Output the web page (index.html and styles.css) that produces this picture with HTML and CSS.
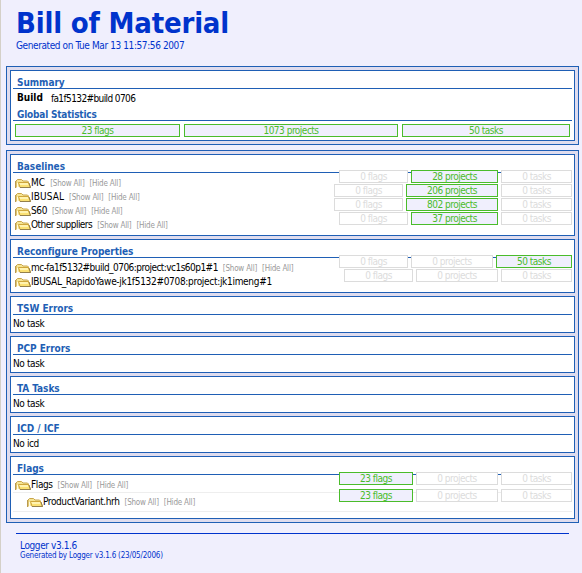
FILE: index.html
```
<!DOCTYPE html>
<html lang="en">
<head>
<meta charset="utf-8">
<title>Bill of Material</title>
<link rel="stylesheet" href="styles.css">
</head>
<body>
<svg class="defs" width="0" height="0">
  <symbol id="folder" viewBox="0 0 16 9">
    <path d="M1 8.500V2L2.500 .5H6.500L8 2H12.500L13.500 3V5" fill="#f5e493" stroke="#c9a54a"/>
    <path d="M.5 9V2" stroke="#b99a50" fill="none"/>
    <path d="M2.500 8V4" stroke="#fffbe0" fill="none"/>
    <path d="M3.500 3.500H13.500L15.500 8.500H5Z" fill="#fbe173" stroke="#cfa63c"/>
    <path d="M4.500 4.500H13M5 5.500H13" stroke="#fff3b0" fill="none"/>
    <path d="M14 4L15.500 8.500H5" stroke="#94804c" fill="none"/>
  </symbol>
</svg>
<header>
  <h1>Bill of Material</h1>
  <p class="date">Generated on Tue Mar 13 11:57:56 2007</p>
</header>
<main>
  <div class="group">
    <section class="summary">
      <h2>Summary</h2>
      <p class="build"><b>Build</b><span>fa1f5132#build 0706</span></p>
      <h2 class="second">Global Statistics</h2>
      <div class="totals"><span class="stat on">23 flags</span><span class="stat on">1073 projects</span><span class="stat on">50 tasks</span></div>
    </section>
  </div>
  <div class="group">
    <section class="baselines">
      <h2>Baselines</h2>
      <div class="rows">
        <div class="row"><div class="name"><svg><use href="#folder"/></svg><span class="wide">MC</span><small>[Show All]</small><small>[Hide All]</small></div><span class="stat f">0 flags</span><span class="stat on p2">28 projects</span><span class="stat t">0 tasks</span></div>
        <div class="row"><div class="name"><svg><use href="#folder"/></svg><span class="wide">IBUSAL</span><small>[Show All]</small><small>[Hide All]</small></div><span class="stat f">0 flags</span><span class="stat on p3">206 projects</span><span class="stat t">0 tasks</span></div>
        <div class="row"><div class="name"><svg><use href="#folder"/></svg><span>S60</span><small>[Show All]</small><small>[Hide All]</small></div><span class="stat f">0 flags</span><span class="stat on p3">802 projects</span><span class="stat t">0 tasks</span></div>
        <div class="row"><div class="name"><svg><use href="#folder"/></svg><span class="tight">Other suppliers</span><small>[Show All]</small><small>[Hide All]</small></div><span class="stat f">0 flags</span><span class="stat on p2">37 projects</span><span class="stat t">0 tasks</span></div>
      </div>
    </section>
    <section class="reconfigure">
      <h2>Reconfigure Properties</h2>
      <div class="rows">
        <div class="row"><div class="name"><svg><use href="#folder"/></svg><span class="tight">mc-fa1f5132#build_0706:project:vc1s60p1#1</span><small>[Show All]</small><small>[Hide All]</small></div><span class="stat f">0 flags</span><span class="stat p1">0 projects</span><span class="stat on t2">50 tasks</span></div>
        <div class="row"><div class="name"><svg><use href="#folder"/></svg><span class="loose">IBUSAL_RapidoYawe-jk1f5132#0708:project:jk1imeng#1</span></div><span class="stat f">0 flags</span><span class="stat p1">0 projects</span><span class="stat t">0 tasks</span></div>
      </div>
    </section>
    <section class="empty"><h2>TSW Errors</h2><p>No task</p></section>
    <section class="empty"><h2>PCP Errors</h2><p>No task</p></section>
    <section class="empty"><h2>TA Tasks</h2><p>No task</p></section>
    <section class="empty"><h2>ICD / ICF</h2><p>No icd</p></section>
    <section class="flags">
      <h2>Flags</h2>
      <div class="rows">
        <div class="row"><div class="name"><svg><use href="#folder"/></svg><span>Flags</span><small>[Show All]</small><small>[Hide All]</small></div><span class="stat on f2">23 flags</span><span class="stat p1">0 projects</span><span class="stat t">0 tasks</span></div>
        <div class="child"><div class="row"><div class="name"><svg><use href="#folder"/></svg><span>ProductVariant.hrh</span><small>[Show All]</small><small>[Hide All]</small></div><span class="stat on f2">23 flags</span><span class="stat p1">0 projects</span><span class="stat t">0 tasks</span></div></div>
      </div>
    </section>
  </div>
</main>
<footer>
  <p>Logger v3.1.6</p>
  <p class="version">Generated by Logger v3.1.6 (23/05/2006)</p>
</footer>
</body>
</html>
```
FILE: styles.css
```
* { box-sizing: border-box; }
body {
  margin: 0;
  height: 573px;
  overflow: hidden;
  padding: 0 3px 0 5px;
  border-left: 1px solid #d4d0c8;
  background: #f0effd;
  color: #000;
  font: 10px/14px "DejaVu Sans Condensed", "DejaVu Sans", sans-serif;
  letter-spacing: -0.4px;
  white-space: nowrap;
}
h1, h2, p { margin: 0; }
.defs { display: block; height: 0; }
header { height: 66px; padding: 7px 0 0 10px; color: #0033cc; }
h1 { font: bold 29px/32px "DejaVu Sans Condensed", "DejaVu Sans", sans-serif; letter-spacing: -0.2px; }
.date { line-height: 14px; }
main { display: flex; flex-direction: column; gap: 5px; }
.group {
  display: flex;
  flex-direction: column;
  gap: 3px;
  padding: 3px;
  border: 1px solid #1f5fb5;
  background: #dfdcee;
}
section { border: 1px solid #1f5fb5; background: #fff; padding: 0 2px; }
h2 {
  height: 18px;
  padding: 5px 0 0 4px;
  border-bottom: 1px solid #1f5fb5;
  color: #1f5fb5;
  font: bold 10px/13px "DejaVu Sans Condensed", "DejaVu Sans", sans-serif;
  letter-spacing: -0.05px;
}
.summary { height: 71px; }
.build { display: flex; gap: 8px; height: 18px; padding: 2px 0 0 4px; }
.build b { letter-spacing: 0; }
.build span { padding-top: 1px; letter-spacing: -0.6px; }
.second { height: 14px; padding-top: 1px; letter-spacing: -0.2px; }
.totals { display: grid; grid-template-columns: 165px 214px 168px; gap: 4px; padding: 3px 0 0 2px; }
.stat {
  flex: none;
  height: 13px;
  border: 1px solid #dcdcdc;
  background: #fff;
  color: #dcdcdc;
  line-height: 12px;
  letter-spacing: -0.5px;
  text-align: center;
}
.on { border-color: #4abc2b; background: #f0effd; color: #4abc2b; }
.baselines { height: 82px; }
.reconfigure { height: 54px; }
.empty { height: 37px; }
.empty p { padding-top: 2px; }
.flags { height: 63px; }
.rows { margin-top: -3px; }
.row { display: flex; gap: 3px; height: 14px; }
.name { flex: 1; min-width: 0; display: flex; height: 14px; padding-left: 2px; margin-top: 6px; }
.name svg { flex: none; width: 16px; height: 9px; margin: 3px 0 0; }
.name small { font-size: 8px; line-height: 15px; color: #999; letter-spacing: -0.2px; margin-left: 5px; }
.wide { letter-spacing: 0.1px; }
.tight { letter-spacing: -0.53px; }
.loose { letter-spacing: -0.3px; }
.f { width: 69px; }
.f2 { width: 74px; }
.p1 { width: 82px; }
.p2 { width: 87px; }
.p3 { width: 92px; }
.t { width: 71px; }
.t2 { width: 76px; }
.child { height: 20px; margin-top: 6px; border: solid #eee; border-width: 1px 0; }
.child .row { margin-top: -4px; }
.child .name { padding-left: 14px; }
footer { margin: 10px 10px 0 10px; padding: 5px 0 0 4px; border-top: 1px solid #0033cc; color: #0033cc; }
footer p { line-height: 13px; }
footer .version { font-size: 8px; line-height: 8px; letter-spacing: -0.2px; }
```
